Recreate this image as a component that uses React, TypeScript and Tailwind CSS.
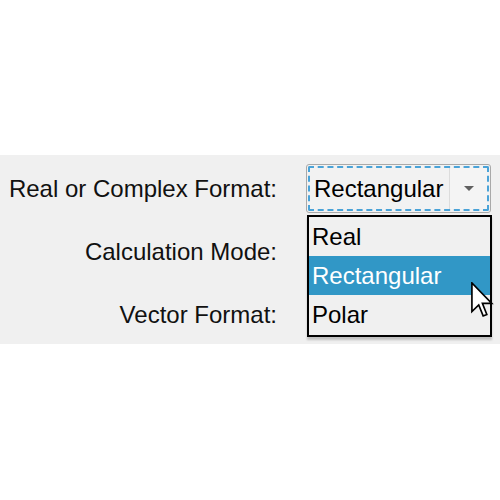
const font = { fontFamily: '"Liberation Sans", Arial, sans-serif' };

function Cursor() {
  return (
    <svg
      className="absolute left-[471px] top-[282px] z-20"
      width="23"
      height="36"
      viewBox="0 0 12.5 19.5"
    >
      <path
        d="M0.5 0.5 L0.5 16 L4.2 12.4 L6.6 18.4 L8.6 17.6 L6.2 11.6 L11.3 11.6 Z"
        fill="#ffffff"
        stroke="#000000"
        strokeWidth="0.9"
        strokeLinejoin="miter"
      />
    </svg>
  );
}

function ComboBox() {
  return (
    <div className="relative w-[185px]">
      <div className="h-[49px] rounded-[3px] border border-[#a9a9a9] bg-[#f2f2f2] p-[1px]">
        <div className="flex h-full items-center rounded-[2px] border-2 border-dashed border-[#4aa3d8] pl-[4px]">
          <span className="flex-1 text-[24px] leading-none text-black">Rectangular</span>
          <div className="flex h-[41px] w-[38px] items-center justify-center border-l border-[#dcdcdc] bg-[#f4f4f4]">
            <svg width="12" height="7" viewBox="0 0 12 7">
              <path d="M1 1 L11 1 L6 6 Z" fill="#606060" />
            </svg>
          </div>
        </div>
      </div>
      <div className="absolute left-[1px] top-[51px] z-10 w-[185px] border-2 border-black bg-[#f0f0f0] shadow-[0_3px_2px_rgba(0,0,0,0.2)]">
        <div className="flex h-[39px] items-center px-[3px] text-[24px] leading-none text-black">Real</div>
        <div className="flex h-[39px] items-center bg-[#3197c6] px-[3px] text-[24px] leading-none text-white">
          Rectangular
        </div>
        <div className="flex h-[40px] items-center px-[3px] text-[24px] leading-none text-black">Polar</div>
      </div>
    </div>
  );
}

function Row({ label, children }: { label: string; children?: React.ReactNode }) {
  return (
    <div className="flex h-[63px] items-center">
      <div className="w-[277px] text-right text-[24px] leading-none text-[#111111]">{label}</div>
      <div className="ml-[29px]">{children}</div>
    </div>
  );
}

export default function App() {
  return (
    <div className="relative h-[500px] w-[500px] overflow-hidden bg-white" style={font}>
      <div className="h-[155px]" />
      <div className="h-[189px] bg-[#f0f0f0] pt-[2px]">
        <Row label="Real or Complex Format:">
          <ComboBox />
        </Row>
        <Row label="Calculation Mode:" />
        <Row label="Vector Format:" />
      </div>
      <Cursor />
    </div>
  );
}
